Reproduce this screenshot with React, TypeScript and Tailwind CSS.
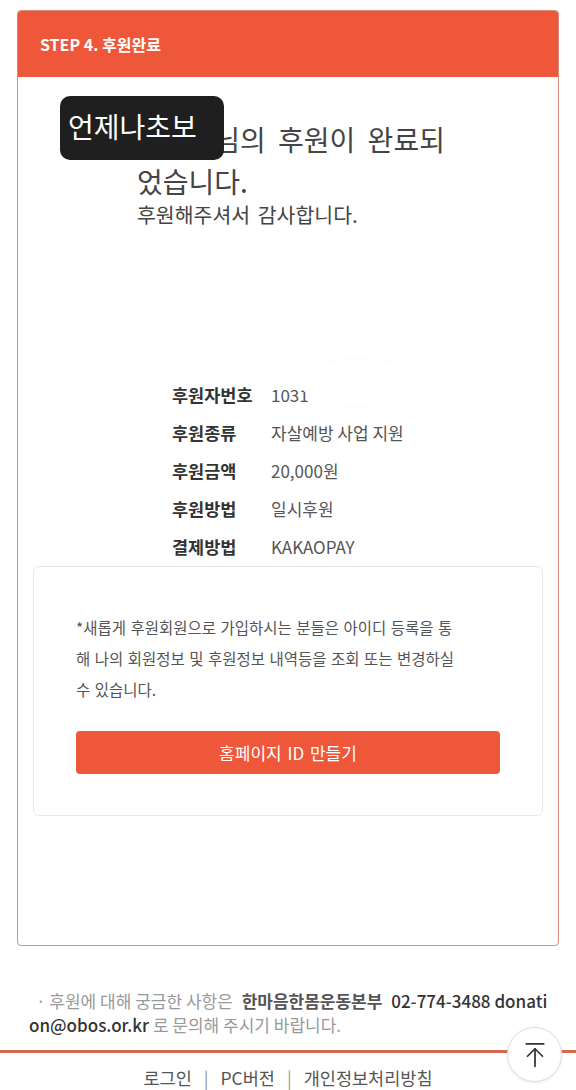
import { ArrowUpToLine } from 'lucide-react'

const rows = [
  { label: '후원자번호', value: '1031', masked: true },
  { label: '후원종류', value: '자살예방 사업 지원' },
  { label: '후원금액', value: '20,000원' },
  { label: '후원방법', value: '일시후원' },
  { label: '결제방법', value: 'KAKAOPAY' },
]

export default function App() {
  return (
    <div className="min-h-screen bg-white font-['Noto_Sans_CJK_KR','Noto_Sans',sans-serif] text-[#333]">
      {/* 완료 카드 */}
      <div className="px-[17px] pt-[10px]">
        <div className="flex h-[936px] flex-col overflow-hidden rounded-[4px] border border-[#d98b79]">
          <div className="flex h-[66px] shrink-0 items-center bg-[#ef573a] pl-[22px] text-[16px] font-bold text-white">
            STEP 4. 후원완료
          </div>

          <div className="relative flex-1">
            <div className="pl-[119px] pt-[41px]">
              <h2 className="text-[28px] font-normal leading-[42px] text-[#444] [word-spacing:6px]">
                홍길동님의 후원이 완료되
                <br />
                었습니다.
              </h2>
              <p className="text-[20.5px] leading-[24px] text-[#444] [word-spacing:3px]">후원해주셔서 감사합니다.</p>
            </div>

            {/* 닉네임 가림 */}
            <div className="absolute left-[42px] top-[19px] flex h-[64px] w-[164px] items-center rounded-[10px] bg-[#1f1f1f] pl-[8px] pb-[4px] text-[28px] text-white">
              언제나초보
            </div>

            {/* 후원 정보 */}
            <dl className="mt-[150px] pl-[154px]">
              {rows.map((r) => (
                <div key={r.label} className="flex h-[38px] items-center text-[17px]">
                  <dt className="w-[99px] text-[17.5px] font-bold text-[#333]">{r.label}</dt>
                  <dd className="relative text-[#555]">
                    {r.value}
                    {r.masked && (
                      <span className="absolute left-[29px] top-[-22px] h-[46px] w-[118px] rounded-[50%] bg-white shadow-[0_0_8px_rgba(0,0,0,0.025)]" />
                    )}
                  </dd>
                </div>
              ))}
            </dl>

            {/* 회원가입 안내 */}
            <div className="mx-[15px] h-[250px] rounded-[6px] border border-[#e8e8e8] px-[42px] pt-[45px]">
              <p className="w-[380px] break-all text-[15.5px] leading-[31px] text-[#555] [word-spacing:1px]">
                *새롭게 후원회원으로 가입하시는 분들은 아이디 등록을 통해 나의 회원정보 및 후원정보 내역등을 조회 또는 변경하실 수 있습니다.
              </p>
              <button className="mt-[26px] flex h-[43px] w-full items-center justify-center rounded-[4px] bg-[#ef573a] text-[17px] text-white [word-spacing:2px]">
                홈페이지 ID 만들기
              </button>
            </div>
          </div>
        </div>
      </div>

      {/* 하단 안내 */}
      <div className="relative">
        <p className="break-all pl-[29px] pr-[26px] pt-[43px] text-[17px] leading-[24px] text-[#999]">
          <span className="pl-[7px]">· 후원에 대해 궁금한 사항은 </span>
          <b className="px-[5px] font-bold text-[#555]">한마음한몸운동본부</b>
          <span className="font-medium text-[#333]"> 02-774-3488 donation@obos.or.kr</span>
          <span> 로 문의해 주시기 바랍니다.</span>
        </p>

        <div className="mt-[13px] h-[3px] bg-[#d8694f]" />

        <nav className="flex items-center justify-center gap-[12px] pt-[12px] text-[17.5px] text-[#555]">
          <a>로그인</a>
          <span className="text-[#999]">|</span>
          <a>PC버전</a>
          <span className="text-[#999]">|</span>
          <a>개인정보처리방침</a>
        </nav>

        <button className="absolute bottom-[9px] right-[14px] flex h-[55px] w-[55px] items-center justify-center rounded-full border border-[#ddd] bg-white shadow-[0_1px_3px_rgba(0,0,0,0.08)]">
          <ArrowUpToLine size={30} strokeWidth={1.4} color="#333" />
        </button>
      </div>
    </div>
  )
}
